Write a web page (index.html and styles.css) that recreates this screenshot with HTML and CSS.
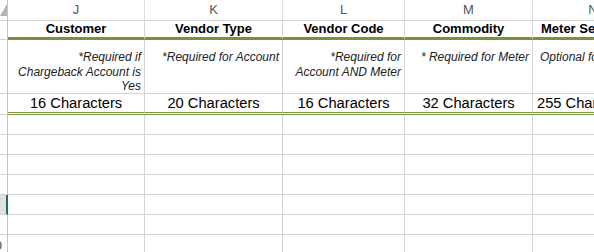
FILE: index.html
```html
<!DOCTYPE html>
<html lang="en">
<head>
<meta charset="UTF-8">
<title>Vendor import template</title>
<link rel="stylesheet" href="styles.css">
</head>
<body>
<div class="sheet">
    <!-- column letters -->
    <div class="corner">
        <svg width="7" height="20" viewBox="0 0 7 20"><polygon points="7,4 7,16 0,16" fill="#b4b4b4"/></svg>
    </div>
    <div class="colhead">J</div>
    <div class="colhead">K</div>
    <div class="colhead">L</div>
    <div class="colhead">M</div>
    <div class="colhead">N</div>

    <!-- field names -->
    <div class="rowhead"></div>
    <div class="cell hdr">Customer</div>
    <div class="cell hdr">Vendor Type</div>
    <div class="cell hdr">Vendor Code</div>
    <div class="cell hdr">Commodity</div>
    <div class="cell hdr left">Meter Serial Number</div>

    <!-- notes -->
    <div class="rowhead"></div>
    <div class="cell note">*Required if<br>Chargeback Account is<br>Yes</div>
    <div class="cell note">*Required for Account</div>
    <div class="cell note">*Required for<br>Account AND Meter</div>
    <div class="cell note">* Required for Meter</div>
    <div class="cell note left">Optional for Meter</div>

    <!-- field lengths -->
    <div class="rowhead"></div>
    <div class="cell len">16 Characters</div>
    <div class="cell len">20 Characters</div>
    <div class="cell len">16 Characters</div>
    <div class="cell len">32 Characters</div>
    <div class="cell len left">255 Characters</div>

    <!-- empty rows -->
    <div class="rowhead"></div><div class="cell"></div><div class="cell"></div><div class="cell"></div><div class="cell"></div><div class="cell"></div>
    <div class="rowhead"></div><div class="cell"></div><div class="cell"></div><div class="cell"></div><div class="cell"></div><div class="cell"></div>
    <div class="rowhead"></div><div class="cell"></div><div class="cell"></div><div class="cell"></div><div class="cell"></div><div class="cell"></div>
    <div class="rowhead"></div><div class="cell"></div><div class="cell"></div><div class="cell"></div><div class="cell"></div><div class="cell"></div>
    <div class="rowhead sel"></div><div class="cell"></div><div class="cell"></div><div class="cell"></div><div class="cell"></div><div class="cell"></div>
    <div class="rowhead"></div><div class="cell"></div><div class="cell"></div><div class="cell"></div><div class="cell"></div><div class="cell"></div>
    <div class="rowhead"><span class="num">10</span></div><div class="cell"></div><div class="cell"></div><div class="cell"></div><div class="cell"></div><div class="cell"></div>
</div>
</body>
</html>
```

FILE: styles.css
```css
body { margin: 0; overflow: hidden; background: #fff;
       font-family: "Liberation Sans", Arial, sans-serif; color: #000; }

.sheet {
    display: grid;
    grid-template-columns: 8px 137px 138px 122px 128px 121px;
    grid-template-rows: 21px 19px 54px 21px repeat(7, 20px);
}
.sheet > div { box-sizing: border-box; overflow: hidden; white-space: nowrap; }

/* headers */
.corner { border-right: 1px solid #c4c4c4; border-bottom: 1px solid #d4d4d4; }
.corner svg { display: block; }
.colhead {
    border-right: 1px solid #e1e1e1; border-bottom: 1px solid #d4d4d4;
    font-size: 13px; color: #555; text-align: center; line-height: 20px;
}
.rowhead { border-right: 1px solid #c4c4c4; border-bottom: 1px solid #d4d4d4; position: relative; }
.rowhead.sel { background: #e1e1e1; border-right: 2px solid #217346; }
.num { position: absolute; right: 5px; top: 3px; font-size: 13px; color: #444; }

/* cells */
.cell {
    border-right: 1px solid #d4d4d4; border-bottom: 1px solid #d4d4d4;
    display: flex; flex-direction: column; justify-content: flex-end;
}
.hdr {
    font-weight: bold; font-size: 13px; line-height: 16px; text-align: center;
    border-bottom: 3px solid #76933c;
}
.note {
    justify-content: flex-start; padding: 10px 3px 0 0;
    font-style: italic; font-size: 12px; line-height: 14.5px; text-align: right;
    color: #222;
}
.len {
    font-size: 14.7px; line-height: 18px; text-align: center;
    border-bottom: 3px double #76933c;
}
.left { text-align: left; padding-left: 8px; }
.note.left { padding-left: 7px; }
.len.left { padding-left: 4px; }
```
